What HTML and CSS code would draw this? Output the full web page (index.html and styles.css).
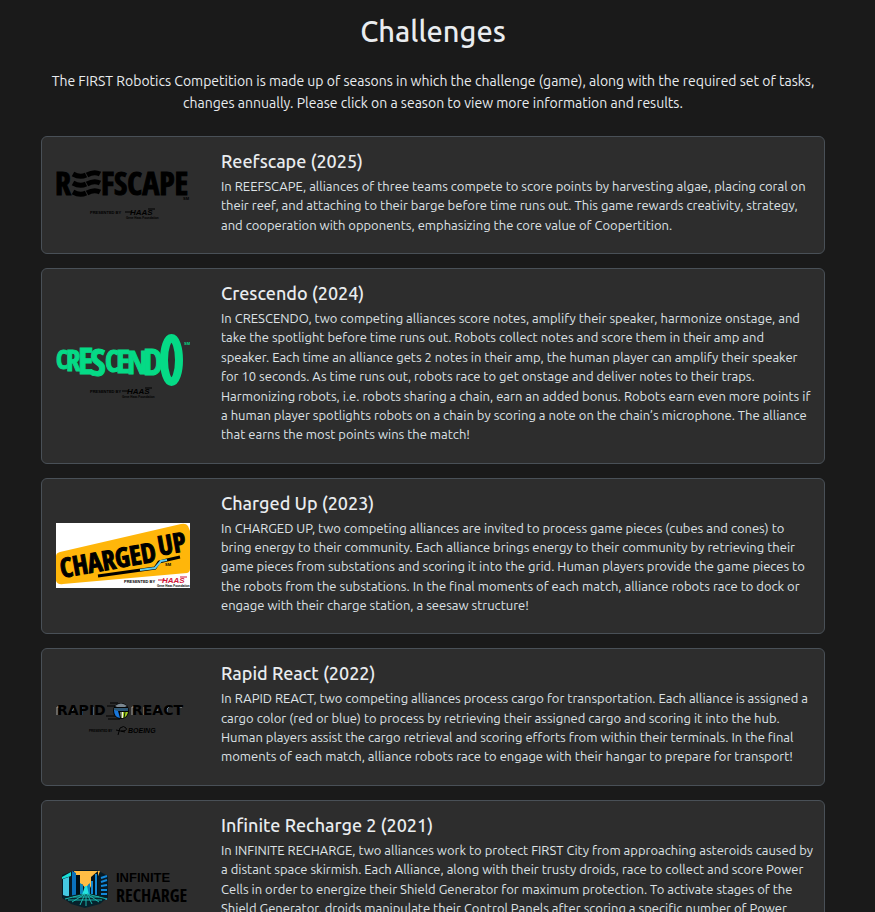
FILE: index.html
```html
<!DOCTYPE html>
<html lang="en">
<head>
<meta charset="utf-8">
<meta name="viewport" content="width=device-width, initial-scale=1">
<title>Challenges</title>
<link rel="stylesheet" href="styles.css">
</head>
<body>
<main class="page">
  <h1 class="heading">Challenges</h1>
  <p class="intro">The FIRST Robotics Competition is made up of seasons in which the challenge (game), along with the required set of tasks, changes annually. Please click on a season to view more information and results.</p>

  <div class="list">
    <a class="card" href="#2025">
      <svg class="logo" viewBox="0 0 134 50" role="img" aria-label="Reefscape logo">
        <text class="slim edge" font-size="32" y="25" x="-1">R</text>
        <text class="slim edge" font-size="32" y="25" x="45">FSCAPE</text>
        <g fill="none" stroke="#000" stroke-width="5">
          <path d="M17 4q7 4 13 1M17 13q7 4 13 1M17 22q7 4 13 1M31 5q7-4 13-1M31 14q7-4 13-1M31 23q7-4 13-1"/>
        </g>
        <text class="tiny" x="127" y="30">SM</text>
        <text class="tiny" x="34" y="44">PRESENTED BY</text>
        <text class="haas" x="74" y="45">HAAS</text>
        <path d="M69 42h7M92 39h7" stroke="#000"/>
        <text class="micro" x="70" y="49">Gene Haas Foundation</text>
      </svg>
      <div class="body">
        <h2 class="title">Reefscape (2025)</h2>
        <p class="text">In REEFSCAPE, alliances of three teams compete to score points by harvesting algae, placing coral on their reef, and attaching to their barge before time runs out. This game rewards creativity, strategy, and cooperation with opponents, emphasizing the core value of Coopertition.</p>
      </div>
    </a>

    <a class="card" href="#2024">
      <svg class="logo" viewBox="0 0 134 66" role="img" aria-label="Crescendo logo">
        <g class="slim green edge-green">
          <text x="0" y="36" font-size="26">C</text>
          <text x="10" y="38" font-size="29">R</text>
          <text x="22" y="41" font-size="36">E</text>
          <text x="34" y="43" font-size="38">S</text>
          <text x="49" y="39" font-size="30">C</text>
          <text x="60" y="40" font-size="33">E</text>
          <text x="71" y="41" font-size="33">N</text>
          <text x="87" y="42" font-size="36">D</text>
        </g>
        <ellipse cx="115.500" cy="27" rx="7.500" ry="22" fill="none" stroke="#05da86" stroke-width="8"/>
        <text class="tiny green" x="128" y="12">SM</text>
        <text class="tiny" x="34" y="60">PRESENTED BY</text>
        <text class="haas" x="71" y="61">HAAS</text>
        <path d="M66 58h7M89 55h7" stroke="#000"/>
        <text class="micro" x="66" y="65">Gene Haas Foundation</text>
      </svg>
      <div class="body">
        <h2 class="title">Crescendo (2024)</h2>
        <p class="text">In CRESCENDO, two competing alliances score notes, amplify their speaker, harmonize onstage, and take the spotlight before time runs out. Robots collect notes and score them in their amp and speaker. Each time an alliance gets 2 notes in their amp, the human player can amplify their speaker for 10 seconds. As time runs out, robots race to get onstage and deliver notes to their traps. Harmonizing robots, i.e. robots sharing a chain, earn an added bonus. Robots earn even more points if a human player spotlights robots on a chain by scoring a note on the chain’s microphone. The alliance that earns the most points wins the match!</p>
      </div>
    </a>

    <a class="card" href="#2023">
      <svg class="logo" viewBox="0 0 134 65" role="img" aria-label="Charged Up logo">
        <path fill="#fff" d="M0 0h134v65H0z"/>
        <path fill="#ffb60a" d="M0 33q0-3 4-4L125 1q5-1 7 2l2 5v38q0 3-3 4L7 61q-5 1-7-3z"/>
        <g transform="rotate(-10 6 56)">
          <text class="slim edge" font-size="27" x="6" y="55">CHARGED</text>
          <text class="slim edge" font-size="27" x="106" y="50">UP</text>
        </g>
        <path d="M42 53L99 45l4-6 8-2 13-3" fill="none" stroke="#000" stroke-width="3"/>
        <path d="M84 47l15-2 6-7 6-1" fill="none" stroke="#62cbed" stroke-width="2"/>
        <text class="tiny" x="109" y="43">SM</text>
        <text class="tiny" x="68" y="60">PRESENTED BY</text>
        <text class="haas red" x="106" y="60">HAAS</text>
        <path d="M102 57h7M124 54h7" stroke="#d2163a"/>
        <text class="micro" x="101" y="64">Gene Haas Foundation</text>
      </svg>
      <div class="body">
        <h2 class="title">Charged Up (2023)</h2>
        <p class="text">In CHARGED UP, two competing alliances are invited to process game pieces (cubes and cones) to bring energy to their community. Each alliance brings energy to their community by retrieving their game pieces from substations and scoring it into the grid. Human players provide the game pieces to the robots from the substations. In the final moments of each match, alliance robots race to dock or engage with their charge station, a seesaw structure!</p>
      </div>
    </a>

    <a class="card" href="#2022">
      <svg class="logo" viewBox="0 0 134 38" role="img" aria-label="Rapid React logo">
        <path class="shine" d="M1 17V9h3M14 15l5-6M26 17V9M37 17V9M76 17V9h3M88 17V9M99 15l5-6M111 15v-4l2-2M122 9h4"/>
        <g class="wide">
          <text x="1" y="17">RAPID</text>
          <text x="76" y="17">REACT</text>
        </g>
        <path d="M54 5h8M51 8h8M50 18h10M52 21h12" stroke="#000"/>
        <circle cx="65" cy="13" r="8" fill="#050505"/>
        <path d="M59 8q6-5 12 0l-2 1h-8z" fill="#7b8790"/>
        <path d="M58 10h14v3H58z" fill="#2c5674"/>
        <path d="M58 12l4 1 2 7q-6-1-6-8z" fill="#1877dd"/>
        <path d="M64 14h3v6h-2z" fill="#f2f4dd"/>
        <path d="M67 14h5q-1 5-5 6z" fill="#a5cf21"/>
        <path d="M65 14v6M69 14l-1 6" stroke="#0a1a08"/>
        <text class="micro" x="33" y="34">PRESENTED BY</text>
        <path d="M62 37l2-7q4-3 6 0t-5 3M60 32l9 2" fill="none" stroke="#000"/>
        <text class="boeing" x="72" y="35">BOEING</text>
      </svg>
      <div class="body">
        <h2 class="title">Rapid React (2022)</h2>
        <p class="text">In RAPID REACT, two competing alliances process cargo for transportation. Each alliance is assigned a cargo color (red or blue) to process by retrieving their assigned cargo and scoring it into the hub. Human players assist the cargo retrieval and scoring efforts from within their terminals. In the final moments of each match, alliance robots race to engage with their hangar to prepare for transport!</p>
      </div>
    </a>

    <a class="card" href="#2021">
      <svg class="logo" viewBox="0 0 134 44" role="img" aria-label="Infinite Recharge logo">
        <path d="M6 9l8-3 7-2h20l11 6v22l-11 6-12 2-14-3-9-5z" fill="#071a25"/>
        <path d="M18 5h26l-5 13-4 4-2-4-3 5-4-5-4 2z" fill="#ffbd45"/>
        <path d="M7 13l6-2v20l-6-2z" fill="#45c8e2"/>
        <path d="M6 11l9-5v4l-9 3z" fill="#19e0d8"/>
        <path d="M16 5l4 2v25h-4z" fill="#0a72bd"/>
        <path d="M20 9h4v20h-4z" fill="#001018"/>
        <path d="M24 17l3 2v10h-3zM34 17l-3 3v9h3z" fill="#0b86bd"/>
        <path d="M35 11l7-6v25h-7z" fill="#03131d"/>
        <path d="M40 8v22M36 15v13" stroke="#1388d3" stroke-width="2"/>
        <path d="M45 12l6-2M45 16l6-2M45 20l6-1M45 24h6M45 28h6M45 32l6 1" stroke="#1389dc" stroke-width="2"/>
        <path d="M29 20l-3 9h7l-2-9z" fill="#26e4df"/>
        <path d="M6 31l18-3h11l17 3-8 7-15 4-14-4z" fill="#06222c"/>
        <path d="M29 28L9 33M29 28l-13 8M29 28l-5 11M30 28v12M31 28l5 10M31 28l12 8M31 28l20 5M17 31h26M12 34h34" fill="none" stroke="#1ab6ae"/>
        <text class="infinite" x="60" y="16">INFINITE</text>
        <text class="slim" font-size="18" x="60" y="36">RECHARGE</text>
      </svg>
      <div class="body">
        <h2 class="title">Infinite Recharge 2 (2021)</h2>
        <p class="text">In INFINITE RECHARGE, two alliances work to protect FIRST City from approaching asteroids caused by a distant space skirmish. Each Alliance, along with their trusty droids, race to collect and score Power Cells in order to energize their Shield Generator for maximum protection. To activate stages of the Shield Generator, droids manipulate their Control Panels after scoring a specific number of Power Cells. Near the end of the match, droids race to their Rendezvous Point to get their Shield Generator operational in order to protect FIRST City!</p>
      </div>
    </a>
  </div>
</main>
</body>
</html>
```

FILE: styles.css
```css
* {
  box-sizing: border-box;
}

body {
  margin: 0;
  background: #1a1a1a;
  color: #e9ecef;
  font-family: Ubuntu, Roboto, "Noto Sans", sans-serif;
}

.page {
  height: 100vh;
  padding: 13px 50px 14px 41px;
  overflow-y: auto;
  scrollbar-width: none;
}

.heading {
  margin: 0 0 21px;
  font-size: 29px;
  line-height: 36px;
  font-weight: 500;
  text-align: center;
}

.intro {
  margin: 0 0 22px;
  font-size: 14px;
  line-height: 22px;
  text-align: center;
}

.list {
  display: flex;
  flex-direction: column;
  gap: 14px;
}

.card {
  display: grid;
  grid-template-columns: 134px minmax(0, 1fr);
  column-gap: 31px;
  align-items: center;
  padding: 13px 10px 13px 14px;
  border: 1px solid #495057;
  border-radius: 6px;
  background: #2d2d2d;
  color: inherit;
  text-decoration: none;
}

.logo {
  display: block;
  width: 100%;
  height: auto;
}

.body {
  padding-bottom: 5px;
}

.title {
  margin: 0 0 5px;
  font-size: 18px;
  line-height: 22px;
  font-weight: 500;
}

.text {
  margin: 0;
  color: #dee2e6;
  font-size: 13px;
  line-height: 1.49;
}

.slim {
  font-family: "Noto Sans ExtraCondensed", "Open Sans Condensed", "Roboto Condensed", "Liberation Sans", sans-serif;
  font-weight: 700;
}

.edge {
  stroke: #000;
}

.green {
  fill: #05da86;
}

.edge-green {
  stroke: #05da86;
}

.tiny {
  font: 700 4px "Liberation Sans", sans-serif;
}

.micro {
  font: 700 3px "Liberation Sans", sans-serif;
}

.haas {
  font: italic 700 8px "Liberation Sans", sans-serif;
}

.red {
  fill: #d2163a;
}

.wide {
  font: 700 14px "DejaVu Sans", sans-serif;
}

.shine {
  fill: none;
  stroke: #a5a5a5;
}

.boeing {
  font: italic 700 7px "Liberation Sans", sans-serif;
}

.infinite {
  font: 700 13px "Liberation Sans", sans-serif;
}
```
